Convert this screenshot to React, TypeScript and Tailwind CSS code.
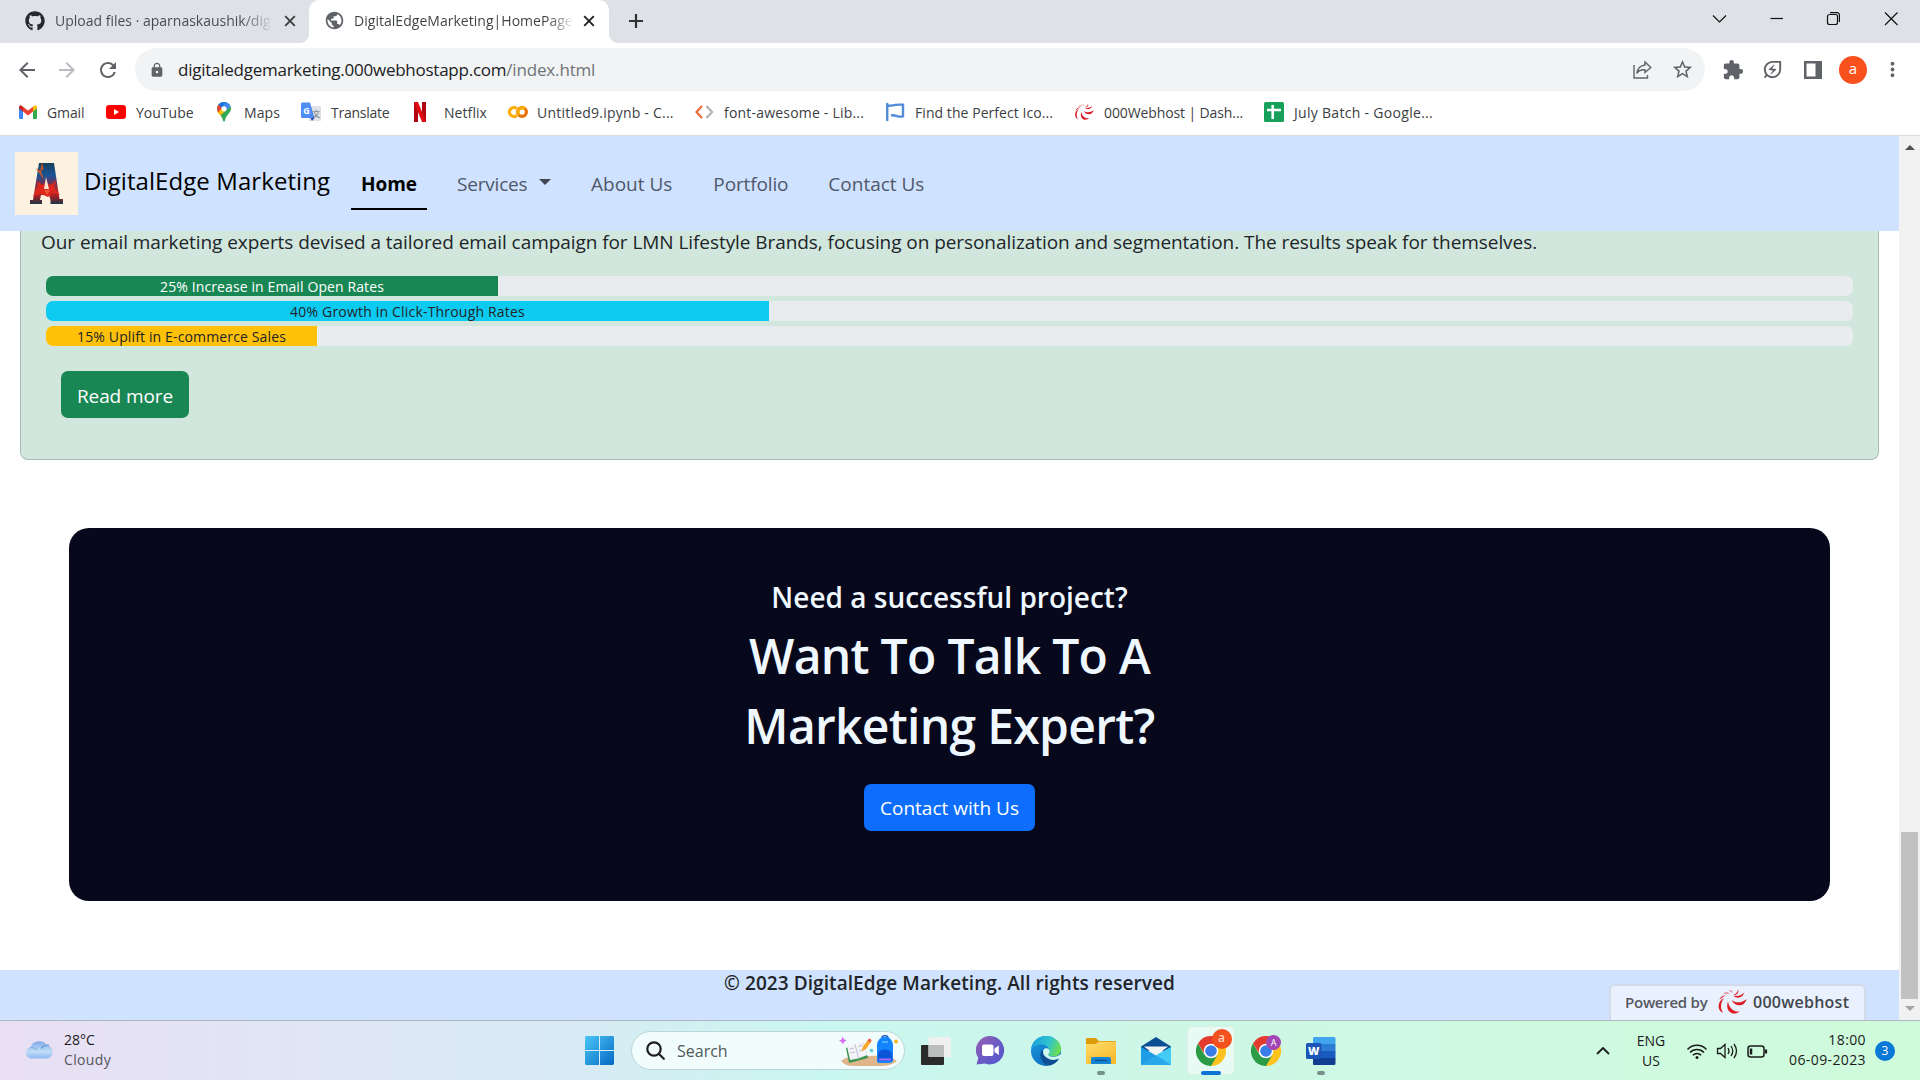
import type { ReactNode } from "react";
import { FaGithub } from "react-icons/fa";
import {
  MdArrowBack,
  MdArrowForward,
  MdRefresh,
  MdLock,
  MdStarBorder,
  MdPublic,
  MdMoreVert,
  MdExtension,
  MdOutlineEnergySavingsLeaf,
} from "react-icons/md";

const Swirl = ({ className }: { className: string }) => (
  <svg viewBox="0 0 30 26" className={className} fill="#dc1f26">
    <path d="M29.500 10 C28 18 18 18.500 14.500 11 C19 14.500 25 14 29.500 10Z" />
    <path d="M22.500 22.500 C16 28 7.500 22 11 12.500 C12 19.500 17 23 22.500 22.500Z" />
    <path d="M6 24 C-.5 21 .5 12 7 9 C3.500 14 3 19 6 24Z" />
    <path d="M27.500 3.500 C25.500 9.500 19 10 16.500 6.500 C21 7.500 24 6.500 27.500 3.500Z" />
    <path d="M21 .5 C22.500 4 19 7 16.500 5.500 C19 5 20.500 3.500 21 .5Z" />
    <path d="M2.500 11 C3 7.500 6 6 9 6.500 C6.500 7.500 4.500 9 2.500 11Z" opacity=".85" />
    <path d="M6 4.500 C8 3 11 3 12.500 4.500 C10 4.500 8 4.700 6 4.500Z" opacity=".8" />
    <path d="M12 1 C14 1 15.500 2.500 15.500 4 C14.500 3 13 2 12 1Z" opacity=".8" />
  </svg>
);

const CloseIcon = ({ className }: { className: string }) => (
  <svg viewBox="0 0 16 16" className={"h-4 w-4 shrink-0 " + className} fill="none" stroke="currentColor" strokeWidth="1.900">
    <path d="M3.200 3.200 L12.800 12.800 M12.800 3.200 L3.200 12.800" />
  </svg>
);

const GmailIcon = () => (
  <svg viewBox="0 0 20 20" className="h-5 w-5">
    <path d="M1 5.500 L5 8.500 V17 H2.200 Q1 17 1 15.800Z" fill="#4285f4" />
    <path d="M19 5.500 L15 8.500 V17 H17.800 Q19 17 19 15.800Z" fill="#34a853" />
    <path d="M15 4.800 L16.300 3.700 Q19 2.500 19 5.200 V6.500 L15 9.600Z" fill="#fbbc04" />
    <path d="M5 4.800 L10 8.600 L15 4.800 V9.600 L10 13.400 L5 9.600Z" fill="#ea4335" />
    <path d="M5 4.800 L3.700 3.700 Q1 2.500 1 5.200 V6.500 L5 9.600Z" fill="#c5221f" />
  </svg>
);

const YoutubeIcon = () => (
  <svg viewBox="0 0 20 20" className="h-5 w-5">
    <rect x="0" y="3" width="20" height="14" rx="3.200" fill="#f00" />
    <path d="M8 7 L13.200 10 L8 13Z" fill="#fff" />
  </svg>
);

const MapsIcon = () => (
  <svg viewBox="0 0 20 20" className="h-5 w-5">
    <path d="M10 0 C5.800 0 3 3 3 6.800 C3 11 8 13 9 18.500 Q10 21 11 18.500 C12 13 17 11 17 6.800 C17 3 14.200 0 10 0Z" fill="#34a853" />
    <path d="M3.500 9.500 L8 4.500 L12.200 8.300 L6.300 13.500 Q4.300 11.500 3.500 9.500Z" fill="#fbbc04" />
    <path d="M4.700 2.300 L8.500 5.500 L4 10.500 Q2 6 4.700 2.300Z" fill="#ea4335" />
    <path d="M4.700 2.300 Q7.500 -.8 12.200 .3 L7.500 6Z" fill="#1a73e8" />
    <path d="M12.200 .3 Q15.200 1.300 16.500 4.200 L11.500 9 L8 5.500Z" fill="#4285f4" />
    <circle cx="10" cy="6.800" r="2.600" fill="#fff" />
  </svg>
);

const TranslateIcon = () => (
  <svg viewBox="0 0 20 20" className="h-5 w-5">
    <rect x="8" y="4" width="12" height="15" rx="1" fill="#dfe1e4" />
    <path d="M1.300 .5 H9 L13.500 16 H1.300 Q0 16 0 14.700 V1.800 Q0 .5 1.300 .5Z" fill="#4f8df5" />
    <path d="M9.500 16 H13.500 L11 19Z" fill="#2a4fc4" />
    <text x="2.200" y="11.500" fontSize="9" fontWeight="700" fill="#fff" fontFamily="Open Sans, sans-serif">G</text>
    <text x="11.300" y="15" fontSize="8" fill="#5f7480" fontFamily="Noto Sans CJK SC, sans-serif">文</text>
  </svg>
);

const NetflixIcon = () => (
  <svg viewBox="0 0 20 20" className="h-5 w-5">
    <path d="M4 0 H8 V20 H4Z M12 0 H16 V20 H12Z" fill="#b1060f" />
    <path d="M4 0 H8 L16 20 H12Z" fill="#e50914" />
  </svg>
);

const ColabIcon = () => (
  <svg viewBox="0 0 20 20" className="h-5 w-5" fill="none" strokeWidth="3.200">
    <path d="M8.700 6.400 A4.500 4.500 0 1 0 8.700 13.600" stroke="#f9ab00" />
    <circle cx="14" cy="10" r="4.400" stroke="#e8710a" />
    <path d="M10.900 13.100 A4.400 4.400 0 0 1 17.100 6.900" stroke="#f9ab00" />
  </svg>
);

const CodeIcon = () => (
  <svg viewBox="0 0 20 20" className="h-5 w-5" fill="none" strokeWidth="2.200">
    <path d="M8 4 L2.500 10 L8 16" stroke="#eb6a3c" />
    <path d="M12.500 4 L18 10 L12.500 16" stroke="#b3b3b3" />
  </svg>
);

const FlagIcon = () => (
  <svg viewBox="0 0 20 20" className="h-5 w-5" fill="none" stroke="#538cd8" strokeWidth="2.400">
    <path d="M2.200 1 V19" />
    <path d="M2 3.500 C7 4.800 8 1.800 18 2.800 V14.300 C12 16 10.500 12 6 13.500" />
  </svg>
);

const SheetIcon = () => (
  <svg viewBox="0 0 20 20" className="h-5 w-5">
    <rect width="20" height="20" rx="1.500" fill="#16a05a" />
    <path d="M8.700 3 V17 M3 8 H17" stroke="#fff" strokeWidth="2.600" />
  </svg>
);

const bookmarks: { label: string; icon: ReactNode; box: string; text: string }[] = [
  { label: "Gmail", icon: <GmailIcon />, box: "w-[88px] gap-[9px]", text: "tracking-[-0.1px]" },
  { label: "YouTube", icon: <YoutubeIcon />, box: "w-[108px] gap-[10px]", text: "tracking-[0px]" },
  { label: "Maps", icon: <MapsIcon />, box: "w-[87px] gap-[10px]", text: "tracking-[0.1px]" },
  { label: "Translate", icon: <TranslateIcon />, box: "w-[109px] gap-[10px]", text: "tracking-[-0.25px]" },
  { label: "Netflix", icon: <NetflixIcon />, box: "w-[98px] gap-[14px]", text: "tracking-[0.07px]" },
  { label: "Untitled9.ipynb - C...", icon: <ColabIcon />, box: "w-[186px] gap-[9px]", text: "tracking-[0.22px]" },
  { label: "font-awesome - Lib...", icon: <CodeIcon />, box: "w-[191px] gap-[10px]", text: "tracking-[0.2px]" },
  { label: "Find the Perfect Ico...", icon: <FlagIcon />, box: "w-[189px] gap-[10px]", text: "tracking-[0.06px]" },
  { label: "000Webhost | Dash...", icon: <Swirl className="h-5 w-5" />, box: "w-[190px] gap-[10px]", text: "tracking-[-0.11px]" },
  { label: "July Batch - Google...", icon: <SheetIcon />, box: "w-[180px] gap-[10px]", text: "tracking-[0.3px]" },
];

function TabStrip() {
  return (
    <div className="flex h-[43px] bg-[#dee1e6] text-[14px] text-[#45494d]">
      <div className="flex w-[309px] items-center pb-0.5 pl-[25px]">
        <FaGithub className="h-5 w-5 shrink-0 text-[#24292f]" />
        <span className="ml-[10px] w-[218px] shrink-0 overflow-hidden whitespace-nowrap bg-linear-to-r from-[#45494d] from-85% to-[#dee1e6] bg-clip-text text-transparent">
          Upload files · aparnaskaushik/dig
        </span>
        <CloseIcon className="ml-[9px] text-[#3c4043]" />
      </div>
      <div className="relative flex w-[300px] items-center rounded-t-[10px] bg-white pb-0.5 pl-[15px]">
        <span className="absolute -left-[10px] bottom-0 h-[10px] w-[10px] bg-[radial-gradient(circle_at_0_0,#dee1e6_10px,white_10.5px)]" />
        <span className="absolute -right-[10px] bottom-0 h-[10px] w-[10px] bg-[radial-gradient(circle_at_100%_0,#dee1e6_10px,white_10.5px)]" />
        <MdPublic className="h-[21px] w-[21px] shrink-0 text-[#5f6368]" />
        <span className="ml-[9px] w-[220px] shrink-0 overflow-hidden whitespace-nowrap bg-linear-to-r from-[#3c4043] from-88% to-white bg-clip-text tracking-[0.03px] text-transparent">
          DigitalEdgeMarketing|HomePage
        </span>
        <CloseIcon className="ml-[7px] text-[#202124]" />
      </div>
      <div className="flex flex-1 items-center pb-0.5 pl-[19px]">
        <svg viewBox="0 0 16 16" className="h-4 w-4 text-[#2f3235]" fill="none" stroke="currentColor" strokeWidth="2.200">
          <path d="M8 1 V15 M1 8 H15" />
        </svg>
      </div>
      <div className="flex w-[210px] items-start pt-3 text-[#111]">
        <svg viewBox="0 0 210 14" className="h-[14px] w-[210px]" fill="none" stroke="currentColor" strokeWidth="1.200">
          <path d="M3 3.500 L9.500 10 L16 3.500" />
          <path d="M60.500 6.500 H73" />
          <rect x="117.500" y="2.500" width="10" height="10" rx="2" />
          <path d="M120 .6 H127.500 Q129.400 .8 129.400 3 V10" />
          <path d="M175 .5 L187.500 13 M187.500 .5 L175 13" />
        </svg>
      </div>
    </div>
  );
}

function Toolbar() {
  return (
    <div className="flex h-[53px] items-center bg-white text-[#5f6368]">
      <MdArrowBack className="ml-[15px] h-6 w-6 shrink-0" />
      <MdArrowForward className="ml-4 h-6 w-6 shrink-0 text-[#b9bbbe]" />
      <MdRefresh className="ml-[17px] h-6 w-6 shrink-0" />
      <div className="ml-[15px] flex h-[43px] w-[1570px] shrink-0 items-center rounded-full bg-[#f1f3f4] pl-[14px]">
        <MdLock className="h-4 w-4 shrink-0" />
        <p className="ml-[13px] flex-1 text-[17px] text-[#202124]">
          <span className="tracking-[-0.25px]">digitaledgemarketing.000webhostapp.com</span>
          <span className="tracking-[-0.16px] text-[#6f7377]">/index.html</span>
        </p>
        <svg viewBox="0 0 20 20" className="h-5 w-5" fill="none" stroke="currentColor" strokeWidth="1.400">
          <path d="M2 5 V18 H15.500 V15" />
          <path d="M13 2 L18.800 7.500 L13 12.500 V9.800 Q7 9.500 4.800 13.500 Q6 5.800 13 5Z" />
        </svg>
        <MdStarBorder className="ml-[19px] mr-[11px] h-[23px] w-[23px]" />
      </div>
      <MdExtension className="ml-[17px] h-[22px] w-[22px] shrink-0" />
      <MdOutlineEnergySavingsLeaf className="ml-[17px] h-[23px] w-[23px] shrink-0" />
      <svg viewBox="0 0 18 18" className="ml-5 h-[18px] w-[18px] shrink-0">
        <path d="M0 0 H18 V18 H0Z M2.500 2.500 V15.500 H11.500 V2.500Z" fill="currentColor" fillRule="evenodd" />
      </svg>
      <span className="ml-[17px] flex h-7 w-7 shrink-0 items-center justify-center rounded-full bg-[#f8511d] pb-0.5 text-[15px] text-white">
        a
      </span>
      <MdMoreVert className="ml-[14px] h-[23px] w-[23px] shrink-0" />
    </div>
  );
}

function Bookmarks() {
  return (
    <div className="flex h-10 items-center border-b border-[#d9dbdf] bg-white pb-[7px] pl-[18px] text-[14px] text-[#3c4043]">
      {bookmarks.map((b) => (
        <div key={b.label} className={"flex shrink-0 items-center whitespace-nowrap " + b.box}>
          {b.icon}
          <span className={b.text}>{b.label}</span>
        </div>
      ))}
    </div>
  );
}

const BrandLogo = () => (
  <svg viewBox="0 0 63 63" className="h-[63px] w-[63px] shrink-0">
    <defs>
      <linearGradient id="brand" x1="0" y1="0" x2="0" y2="1">
        <stop offset="0" stopColor="#173f5c" />
        <stop offset=".3" stopColor="#1b5597" />
        <stop offset=".5" stopColor="#6a3057" />
        <stop offset=".65" stopColor="#b52a2c" />
        <stop offset=".82" stopColor="#a01f22" />
        <stop offset="1" stopColor="#173848" />
      </linearGradient>
    </defs>
    <rect width="63" height="63" fill="#fdf2df" />
    <path d="M24 11 H39 L44.500 47 H48 V52 H35.500 V48 L34 43 H26 L25 48 H27 V52 H15 V48 H18Z" fill="url(#brand)" />
    <path d="M18 44 L23 35 L22 29 L27 33 L30 31 L36 33 L41 28 L39 36 L45 43 L38 41 L33 45 L26 42Z" fill="#dd261c" />
    <path d="M31 25 L34 37 H29Z" fill="#fbe6d2" />
    <path d="M21 16 L26 19 L29 28 L24 21Z M27 10 L28.500 17 L25 20Z" fill="#c4532c" />
    <path d="M29 38 L35 38 L32 43Z" fill="#f0553a" />
  </svg>
);

function Navbar() {
  return (
    <nav className="flex h-[95px] items-center bg-[#cfe2ff] pl-[15px] text-[19px] text-[#50586a]">
      <BrandLogo />
      <span className="ml-[6px] w-[267px] shrink-0 pb-[5px] text-[24px] tracking-[0.08px] text-black">DigitalEdge Marketing</span>
      <span className="flex h-[53px] w-[76px] shrink-0 items-center justify-center border-b-2 border-black pt-1 font-bold text-black">
        Home
      </span>
      <span className="ml-[30px] w-[82px] pt-0.5 tracking-[-0.2px]">Services</span>
      <span className="mb-[3px] h-0 w-0 border-x-[6px] border-t-[6px] border-x-transparent border-t-[#3f4654]" />
      <span className="ml-[40px] pt-0.5">About Us</span>
      <span className="ml-[41px] pt-0.5 tracking-[-0.14px]">Portfolio</span>
      <span className="ml-[40px] pt-0.5">Contact Us</span>
    </nav>
  );
}

const bars = [
  { label: "25% Increase in Email Open Rates", fill: "w-[452px] bg-[#198754] text-white tracking-[0.11px]" },
  { label: "40% Growth in Click-Through Rates", fill: "w-[723px] bg-[#0dcaf0] text-[#212529] tracking-[0.19px]" },
  { label: "15% Uplift in E-commerce Sales", fill: "w-[271px] bg-[#ffc107] text-[#212529] tracking-[0.14px]" },
];

function CampaignCard() {
  return (
    <section className="mx-5 h-[229px] rounded-b-[8px] border border-t-0 border-[#a9bdb3] bg-[#d1e7dd] pl-5">
      <p className="-mt-px whitespace-nowrap text-[19px] leading-6 tracking-[-0.064px] text-[#212529]">
        Our email marketing experts devised a tailored email campaign for LMN Lifestyle Brands, focusing on
        personalization and segmentation. The results speak for themselves.
      </p>
      <div className="ml-[5px] mt-[22px] flex w-[1807px] flex-col gap-[5px]">
        {bars.map((b) => (
          <div key={b.label} className="flex h-5 overflow-hidden rounded-[7px] bg-[#e9ecef]">
            <div className={"flex items-center justify-center pt-px text-[14px] " + b.fill}>{b.label}</div>
          </div>
        ))}
      </div>
      <button className="ml-5 mt-[25px] flex h-[47px] w-[128px] items-center justify-center rounded-[7px] bg-[#198754] pt-[3px] text-[19px] tracking-[-0.1px] text-white">
        Read more
      </button>
    </section>
  );
}

function CallToAction() {
  return (
    <section className="mx-[69px] mt-[68px] flex h-[373px] flex-col items-center rounded-[20px] bg-[#07081b] text-[#f0f8ff]">
      <h4 className="mt-[49px] text-[28px] font-semibold leading-10">Need a successful project?</h4>
      <h2 className="mt-1 text-center text-[48px] font-semibold leading-[70px] tracking-[-0.7px]">
        Want To Talk To A
        <br />
        Marketing Expert?
      </h2>
      <button className="mt-[23px] flex h-[47px] w-[171px] items-center justify-center rounded-[7px] bg-[#0d6efd] pt-px text-[19px] text-white">
        Contact with Us
      </button>
    </section>
  );
}

function Footer() {
  return (
    <footer className="relative mt-[69px] h-[50px] bg-[#cfe2ff] text-center">
      <p className="text-[19px] font-semibold leading-[26px] tracking-[0.07px] text-[#212529]">
        © 2023 DigitalEdge Marketing. All rights reserved
      </p>
      <div className="absolute bottom-0 right-[33px] flex h-[36px] w-[257px] items-center rounded-t-[6px] border-2 border-b-0 border-[#d3daea] bg-[#e9f0fe] pb-0.5 pl-[14px] text-[#54585f]">
        <span className="w-[92px] text-left text-[15px] font-semibold tracking-[-0.25px]">Powered by</span>
        <Swirl className="h-[26px] w-[30px]" />
        <span className="ml-[6px] text-[16px] font-semibold tracking-[0.25px] text-[#43474d]">000webhost</span>
      </div>
    </footer>
  );
}

function Scrollbar() {
  return (
    <div className="flex w-[21px] shrink-0 flex-col items-center bg-[#f1f1f1] pb-[9px] pt-[9px]">
      <span className="h-0 w-0 border-x-[5px] border-b-[5px] border-x-transparent border-b-[#505050]" />
      <span className="mt-auto h-[167px] w-[17px] bg-[#c1c1c1]" />
      <span className="mt-[7px] h-0 w-0 border-x-[5px] border-t-[5px] border-x-transparent border-t-[#a3a3a3]" />
    </div>
  );
}

const ChromeIcon = () => (
  <svg viewBox="0 0 30 30" className="h-[30px] w-[30px]">
    <path d="M15 15 L2 7.500 A15 15 0 0 1 28 7.500Z" fill="#e33b2e" />
    <path d="M15 15 L28 7.500 A15 15 0 0 1 15 30Z" fill="#fcc31e" />
    <path d="M2 7.500 A15 15 0 0 0 15 30 L21.500 18.700 L8.500 18.700Z" fill="#2c9b45" />
    <path d="M15 8 H28.200 L21 19Z" fill="#fcc31e" />
    <path d="M8.800 18.500 L2 7.500 L15 8Z" fill="#e33b2e" />
    <circle cx="15" cy="15" r="7.300" fill="#fff" />
    <circle cx="15" cy="15" r="5.800" fill="#3a7de8" />
  </svg>
);

const WindowsIcon = () => (
  <svg viewBox="0 0 29 29" className="h-[29px] w-[29px]">
    <defs>
      <linearGradient id="win" gradientUnits="userSpaceOnUse" x1="0" y1="0" x2="29" y2="29">
        <stop offset="0" stopColor="#4cc7f7" />
        <stop offset="1" stopColor="#0468c4" />
      </linearGradient>
    </defs>
    <path d="M1 0 H14 V14 H0 V1Z M15 0 H28 L29 1 V14 H15Z M0 15 H14 V29 H1 L0 28Z M15 15 H29 V28 L28 29 H15Z" fill="url(#win)" />
  </svg>
);

const SearchArt = () => (
  <svg viewBox="0 0 60 32" className="h-8 w-[60px]">
    <path d="M2 26 Q8 20 30 21 Q52 20 58 26 Q52 31 42 31 H14 Q6 31 2 26Z" fill="#dfb58b" />
    <path d="M3.500 1.500 L4.800 4 L7.500 5.500 L5 7 L3.800 9.500 L2.600 7 L0 5.500 L2.600 4.500Z" fill="#d96bf0" />
    <path d="M7 13 L24 7 L29 23 L10 28Z" fill="#3f9350" />
    <path d="M8 11 L16 9.500 L24 6 L28.500 20 L19 23.500 L11 25Z" fill="#f2f2f8" />
    <path d="M16 9.500 L19.500 23 M10.500 14 L15 13 M11.500 18 L16 17 M19 11.500 L24 10 M20 16 L25 14.500" stroke="#b5b5c8" strokeWidth=".8" />
    <path d="M22.500 16.500 L24 11.500 L29 5 L32 7 L27 14Z" fill="#f8a62b" />
    <path d="M28.500 5.500 L30 3.500 Q32 3.500 32.500 5.500 L31.500 7.500Z" fill="#ea5742" />
    <circle cx="32.500" cy="15.500" r="1.800" fill="#5ec9dd" />
    <circle cx="57" cy="6.500" r="1.900" fill="#f5b514" />
    <path d="M43 3 Q43 .8 46 .8 Q49 .8 49 3" fill="none" stroke="#1258c0" strokeWidth="1.600" />
    <path d="M38 26 V10 Q39 2 46 2 Q53 2 54 10 V26 Q53 28 50 28 H41 Q38 28 38 26Z" fill="#1384ff" />
    <path d="M39 26 V19 Q40 14.500 46 14.500 Q52 14.500 53 19 V26Z" fill="#0b56d6" />
    <path d="M40 24.500 H52" stroke="#a66bff" strokeWidth="2" />
    <path d="M43 7 H49" stroke="#8ed0ff" strokeWidth="1" />
  </svg>
);

const TaskViewIcon = () => (
  <svg viewBox="0 0 30 28" className="h-7 w-[30px]">
    <rect x="0" y="8" width="23" height="20" rx="1" fill="#2b2b2b" />
    <rect x="7.500" y="0" width="22.500" height="20" rx="1" fill="#f0f0f0" />
    <rect x="7.500" y="8" width="15.500" height="12" fill="#bcbebd" />
  </svg>
);

const ChatIcon = () => (
  <svg viewBox="0 0 29 29" className="h-[29px] w-[29px]">
    <defs>
      <linearGradient id="chat" x1="0" y1="0" x2="1" y2="1">
        <stop offset="0" stopColor="#9a5fae" />
        <stop offset=".5" stopColor="#6c5bc4" />
        <stop offset="1" stopColor="#5356cf" />
      </linearGradient>
    </defs>
    <path d="M14.500 0 A14.200 14.200 0 1 1 9 27.500 L.5 28.500 L2.300 22 A14.200 14.200 0 0 1 14.500 0Z" fill="url(#chat)" />
    <rect x="6" y="8.500" width="11.500" height="11.500" rx="2" fill="#fff" />
    <path d="M18.500 12.500 L22.800 9.500 V19 L18.500 16Z" fill="#fff" />
  </svg>
);

const EdgeIcon = () => (
  <svg viewBox="0 0 30 30" className="h-[30px] w-[30px]">
    <defs>
      <linearGradient id="edgeTop" x1="0" y1="0.300" x2="1" y2="0.600">
        <stop offset="0" stopColor="#1a9fe0" />
        <stop offset=".55" stopColor="#2fc4cf" />
        <stop offset="1" stopColor="#6fe04a" />
      </linearGradient>
      <linearGradient id="edgeSide" x1="0" y1="0" x2="0.800" y2="1">
        <stop offset="0" stopColor="#1b9de2" />
        <stop offset="1" stopColor="#0b66b8" />
      </linearGradient>
    </defs>
    <circle cx="15" cy="15" r="15" fill="url(#edgeSide)" />
    <path d="M0 13.500 C1 5 7.500 0 15 0 C24 0 30 6.500 30 13 C30 18 26 20.500 22 20.500 C18.500 20.500 17 19.500 17.500 18.500 C19.500 16 18.500 8.500 10.500 8.500 C5.500 8.500 1.500 11 0 13.500Z" fill="url(#edgeTop)" />
    <path d="M10 15.500 C7.500 22 12.500 30 19.500 29.300 C23.500 28 26.500 25.500 28.200 22 C24 24 17 24.500 13 19.500 C11.800 18 11.500 15.500 12.500 13.500 Q10.800 14 10 15.500Z" fill="#0c4d93" />
    <path d="M12.300 14 C14 11 18.500 12 18.700 15.500 C18.500 17.500 17 18 17.500 19.300 C19 21.500 25 21.500 30 18 L30.500 22 L27.500 22.800 C23 25 17 24 13.500 19.800 Q11.500 17 12.300 14Z" fill="#cdf6ec" />
  </svg>
);

const FolderIcon = () => (
  <svg viewBox="0 0 30 28" className="h-7 w-[30px]">
    <defs>
      <linearGradient id="folder" x1="0" y1="0" x2="0.600" y2="1">
        <stop offset="0" stopColor="#ffdd6b" />
        <stop offset="1" stopColor="#f9bb2d" />
      </linearGradient>
    </defs>
    <path d="M0 2 Q0 1 1 1 H10 L13 4 H29 Q30 4 30 5 V12 H0Z" fill="#dd9c0c" />
    <path d="M0 7 H9.500 L13 4.700 H30 V26 Q30 27 29 27 H1 Q0 27 0 26Z" fill="url(#folder)" />
    <path d="M5 27 V22 Q5 20 7 20 H23 Q25 20 25 22 V27Z" fill="#1585d3" />
    <path d="M8.500 23.500 H21.500" stroke="#0a5293" strokeWidth="1.400" />
  </svg>
);

const MailIcon = () => (
  <svg viewBox="0 0 30 28" className="h-7 w-[30px]">
    <path d="M0 9.500 L15 0 L30 9.500 V14 H0Z" fill="#0b4f92" />
    <path d="M3 9.500 H27 L15 19Z" fill="#f3f3f3" />
    <path d="M0 10 L15 18.500 L30 10 V28 H0Z" fill="#1f9ce6" />
    <path d="M30 10 L15 18.500 L30 28Z" fill="#42cbf6" />
    <path d="M0 28 L15 18.500 L30 28Z" fill="#2aa9ea" />
  </svg>
);

const WordIcon = () => (
  <svg viewBox="0 0 30 28" className="h-7 w-[30px]">
    <path d="M8 0 H28 Q29.500 0 29.500 1.500 V7 H7 V1Z" fill="#41a5ee" />
    <path d="M7 7 H29.500 V14 H7Z" fill="#2b7cd3" />
    <path d="M7 14 H29.500 V21 H7Z" fill="#185abd" />
    <path d="M7 21 H29.500 V26.500 Q29.500 28 28 28 H8 Q7 28 7 27Z" fill="#103f91" />
    <rect x="0" y="6" width="15.500" height="16" rx="1.500" fill="#1b56b8" />
    <text x="7.700" y="18" textAnchor="middle" fontSize="11" fontWeight="800" fill="#fff" fontFamily="Open Sans, sans-serif">W</text>
  </svg>
);

const CloudIcon = () => (
  <svg viewBox="0 0 30 20" className="h-5 w-[30px]">
    <defs>
      <linearGradient id="cloud" x1="0" y1="0" x2="0" y2="1">
        <stop offset="0" stopColor="#7ea9e8" />
        <stop offset=".6" stopColor="#c0dcf7" />
        <stop offset="1" stopColor="#8fb9f3" />
      </linearGradient>
    </defs>
    <path d="M6 19.500 A5.700 5.700 0 0 1 5.500 8.300 A9 8.500 0 0 1 22 6.500 A6.700 6.700 0 0 1 23 19.500Z" fill="url(#cloud)" />
    <path d="M16 9.500 Q19 5.500 24 6.300" fill="none" stroke="#6797dc" strokeWidth="1.200" />
    <path d="M5 8.600 Q9 8 12 10.500" fill="none" stroke="#7ba6e2" strokeWidth="1" />
  </svg>
);

function TaskButton({ children, marker }: { children: ReactNode; marker?: string }) {
  return (
    <div className="relative flex h-[49px] w-[55px] items-center justify-center">
      {children}
      {marker && <span className={"absolute bottom-0 h-1 rounded-full " + marker} />}
    </div>
  );
}

function Taskbar() {
  return (
    <div className="flex h-[60px] items-center border-t border-[#aeb9bf] bg-[linear-gradient(90deg,#e9dff3_0%,#e1e5f6_14%,#d8ebf5_30%,#c9f6f0_43%,#cdf6e6_60%,#cefae0_80%,#cffadb_100%)] text-[14px] text-[#1b1b1b]">
      <div className="flex w-[585px] shrink-0 items-center pb-[3px] pl-[25px]">
        <CloudIcon />
        <div className="ml-[9px] pt-px leading-5">
          <p>28°C</p>
          <p className="tracking-[0.34px] text-[#55555d]">Cloudy</p>
        </div>
      </div>
      <WindowsIcon />
      <div className="ml-[17px] flex h-[39px] w-[274px] shrink-0 items-center rounded-full border border-[#bcd6d8] bg-[#f1fdfc] pl-[14px]">
        <svg viewBox="0 0 19 19" className="h-[19px] w-[19px]" fill="none" stroke="#1f1f1f" strokeWidth="2.200">
          <circle cx="8" cy="8" r="6.700" />
          <path d="M12.800 12.800 L17.800 17.800" strokeLinecap="round" />
        </svg>
        <span className="ml-[12px] flex-1 text-[16px] text-[#505858]">Search</span>
        <SearchArt />
        <span className="w-[5px]" />
      </div>
      <div className="ml-[3px] flex">
        <TaskButton><TaskViewIcon /></TaskButton>
        <TaskButton><ChatIcon /></TaskButton>
        <TaskButton><EdgeIcon /></TaskButton>
        <TaskButton marker="w-2 bg-[#76908a]"><FolderIcon /></TaskButton>
        <TaskButton><MailIcon /></TaskButton>
        <div className="relative mx-[3.500px] flex h-[49px] w-12 items-center justify-center rounded-[5px] border border-[#d9efe6] bg-[#e7faf3]">
          <ChromeIcon />
          <span className="absolute right-[2px] top-[2px] flex h-5 w-5 items-center justify-center rounded-full bg-[#f4511e] pb-0.5 text-[12px] font-semibold text-[#fbd6c8]">a</span>
          <span className="absolute -bottom-px h-1 w-5 rounded-full bg-[#0a75d4]" />
        </div>
        <TaskButton>
          <ChromeIcon />
          <span className="absolute right-[12px] top-[9px] flex h-[15px] w-[15px] items-center justify-center rounded-full bg-[#a346b5] text-[9px] text-white">A</span>
        </TaskButton>
        <TaskButton marker="w-2 bg-[#76908a]"><WordIcon /></TaskButton>
      </div>
      <div className="ml-auto flex items-center pr-[25px]">
        <svg viewBox="0 0 14 8" className="h-2 w-[14px]" fill="none" stroke="#1b1b1b" strokeWidth="1.800">
          <path d="M1 7 L7 1 L13 7" />
        </svg>
        <p className="ml-[25px] w-8 text-center leading-5">
          ENG
          <br />
          US
        </p>
        <svg viewBox="0 0 82 18" className="ml-[19px] h-[18px] w-[82px]" fill="none" stroke="#1b1b1b" strokeWidth="1.500">
          <path d="M1.500 7.500 A13 13 0 0 1 20.500 7.500 M4 10.500 A9.700 9.700 0 0 1 18 10.500 M6.800 13.200 A6 6 0 0 1 15.200 13.200" />
          <circle cx="11" cy="15.500" r="1.500" fill="#1b1b1b" stroke="none" />
          <path d="M31.500 6.500 H34.500 L39 2.500 V15.500 L34.500 11.500 H31.500Z M42 6 Q44 9 42 12 M45 4 Q48.500 9 45 14 M48 2 Q53 9 48 16" strokeWidth="1.300" />
          <rect x="62" y="4" width="16" height="11" rx="2.500" />
          <path d="M65 6.500 V12.500" strokeWidth="2.500" />
          <path d="M80 7.500 V11.500" strokeWidth="2.200" />
        </svg>
        <p className="ml-[18px] w-[80px] pb-0.5 text-right leading-5 tracking-[0.39px]">
          18:00
          <br />
          06-09-2023
        </p>
        <span className="ml-[9px] flex h-5 w-5 items-center justify-center rounded-full bg-[#0a78d6] text-[12px] text-white">3</span>
      </div>
    </div>
  );
}

export default function App() {
  return (
    <div className="flex h-[1080px] w-[1920px] flex-col overflow-hidden bg-white font-['Open_Sans',sans-serif]">
      <TabStrip />
      <Toolbar />
      <Bookmarks />
      <div className="flex h-[884px] shrink-0">
        <main className="flex flex-1 flex-col bg-white">
          <Navbar />
          <CampaignCard />
          <CallToAction />
          <Footer />
        </main>
        <Scrollbar />
      </div>
      <Taskbar />
    </div>
  );
}
